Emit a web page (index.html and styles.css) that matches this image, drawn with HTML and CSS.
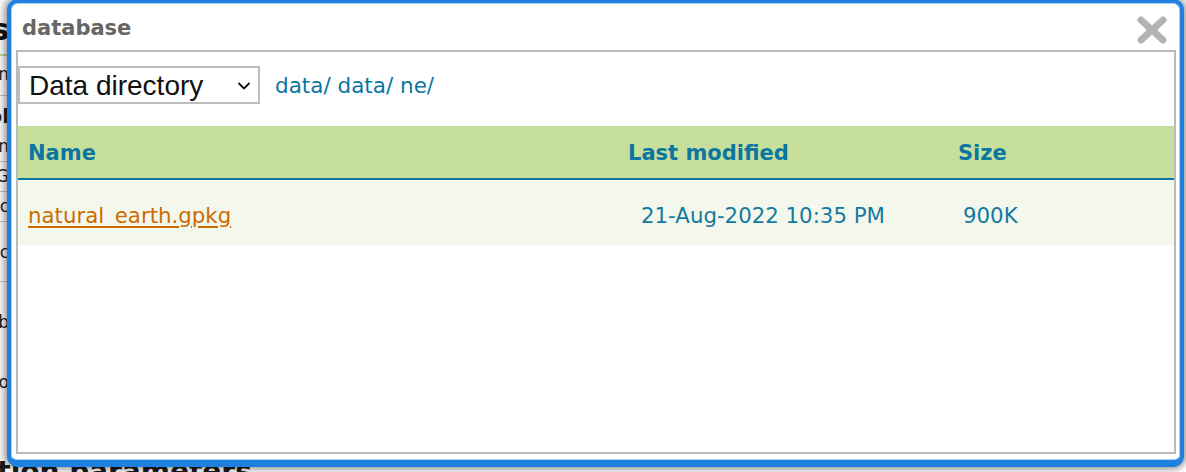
FILE: index.html
```html
<!DOCTYPE html>
<html lang="en">
<head>
<meta charset="utf-8">
<title>database</title>
<link rel="stylesheet" href="styles.css">
</head>
<body>
<div class="page">
  <div class="strip">
    <div class="srow h1row"><span class="big">Settings</span></div>
    <div class="srow r1"><span>Connection</span></div>
    <div class="srow r2 bold"><span>Pool</span></div>
    <div class="srow r3 line"><span>Min</span></div>
    <div class="srow r3 line"><span>EPSG</span></div>
    <div class="srow r3 line"><span>Spec</span></div>
    <div class="srow r4 line"><span>Exec</span></div>
    <div class="srow r5"><span>Tab</span></div>
    <div class="srow r6"><span>Info</span></div>
  </div>
  <h2 class="section">Connection parameters</h2>
</div>

<div class="dialog">
  <div class="titlebar">
    <span class="title">database</span>
    <span class="close" aria-label="close">
      <svg width="32" height="28" viewBox="0 0 32 28">
        <path d="M5 4 L27 24 M27 4 L5 24" stroke="#b3b3b3" stroke-width="7" stroke-linecap="round" fill="none"/>
      </svg>
    </span>
  </div>
  <div class="box">
    <div class="toolbar">
      <div class="selectwrap">
        <select class="dirselect">
          <option>Data directory</option>
        </select>
        <svg class="chev" width="14" height="10" viewBox="0 0 14 10">
          <path d="M1.5 2 L7 7.5 L12.5 2" stroke="#111" stroke-width="1.8" fill="none"/>
        </svg>
      </div>
      <a class="crumbs" href="#">data/ data/ ne/</a>
    </div>
    <div class="table">
      <div class="thead">
        <div class="th c1">Name</div>
        <div class="th c2">Last modified</div>
        <div class="th c3">Size</div>
      </div>
      <div class="trow">
        <div class="td c1"><a class="file" href="#">natural_earth.gpkg</a></div>
        <div class="td c2 date">21-Aug-2022 10:35 PM</div>
        <div class="td c3 size">900K</div>
      </div>
    </div>
  </div>
</div>
</body>
</html>
```

FILE: styles.css
```css
* { box-sizing: border-box; }

html, body {
  margin: 0;
  padding: 0;
  width: 1186px;
  height: 472px;
  overflow: hidden;
  background: #ffffff;
  font-family: "DejaVu Sans", Verdana, sans-serif;
}

body { position: relative; }

/* background page (mostly hidden by the modal) */
.page {
  display: flex;
  flex-direction: column;
  height: 472px;
}

.strip {
  width: 9px;
  overflow: hidden;
  display: flex;
  flex-direction: column;
  flex: 1;
  background: #f7f7f7;
}

.srow {
  display: flex;
  justify-content: flex-end;
  white-space: nowrap;
  color: #222;
  font-size: 17px;
  font-family: "DejaVu Sans", sans-serif;
  flex-shrink: 0;
}

.h1row {
  height: 56px;
  padding-top: 12px;
  border-bottom: 2px solid #b9d49a;
}
.big { font-size: 30px; font-weight: bold; color: #111; }

.r1 { height: 40px; padding-top: 8px; border-bottom: 1px solid #bbb; }
.r2 { height: 36px; padding-top: 8px; font-weight: bold; font-size: 20px; }
.r3 { height: 30px; padding-top: 4px; }
.line { border-bottom: 1px solid #bbb; }
.r4 { height: 60px; padding-top: 20px; }
.r5 { height: 60px; padding-top: 30px; }
.r6 { height: 60px; padding-top: 30px; }

.section {
  margin: auto 0 0 0;
  height: 6px;
  overflow: visible;
  font-size: 28px;
  font-weight: bold;
  color: #1a1a1a;
  line-height: 28px;
  white-space: nowrap;
  text-indent: -118px;
  transform: translateY(-8px);
}

/* modal dialog */
.dialog {
  position: absolute;
  left: 7px;
  top: -1px;
  width: 1177px;
  height: 468px;
  background: #ffffff;
  border: 4px solid #1f80e0;
  border-bottom-width: 7px;
  border-radius: 11px;
  box-shadow: inset 0 0 0 1px #a9d0f7, 0 0 7px 2px rgba(0, 0, 0, 0.45);
  display: flex;
  flex-direction: column;
  padding: 0 4px 6px 5px;
}

.titlebar {
  display: flex;
  justify-content: space-between;
  align-items: center;
  height: 47px;
  padding: 0 7px 0 6px;
}

.title {
  font-size: 21px;
  font-weight: bold;
  color: #666666;
  line-height: 24px;
  margin-top: 2px;
}

.close {
  display: flex;
  margin-top: 6px;
  margin-right: 1px;
  filter: blur(0.6px);
}

.box {
  flex: 1;
  border: 2px solid #bababa;
  display: flex;
  flex-direction: column;
}

.toolbar {
  display: flex;
  gap: 15px;
  padding-top: 14px;
  height: 74px;
  align-items: flex-start;
}

.selectwrap {
  position: relative;
  width: 242px;
  height: 38px;
}

.dirselect {
  appearance: none;
  -webkit-appearance: none;
  width: 100%;
  height: 100%;
  border: 2px solid #bdbdbd;
  border-radius: 0;
  background: #ffffff;
  color: #111;
  font-family: "Liberation Sans", Arial, sans-serif;
  font-size: 28px;
  padding: 0 0 0 9px;
  margin: 0;
  outline: none;
}

.chev {
  position: absolute;
  right: 9px;
  top: 15px;
}

.crumbs {
  color: #0b76a0;
  text-decoration: none;
  font-size: 21.5px;
  line-height: 40px;
}

.table {
  display: flex;
  flex-direction: column;
}

.thead, .trow {
  display: grid;
  grid-template-columns: 600px 330px 1fr;
  align-items: center;
}

.thead {
  height: 54px;
  background: #c6df9c;
  border-bottom: 2px solid #0b76a0;
}

.th {
  font-size: 21px;
  font-weight: bold;
  color: #0b76a0;
  padding-left: 10px;
  padding-top: 2px;
}

.trow {
  height: 65px;
  background: #f4f8ec;
}

.td {
  font-size: 21.3px;
  color: #137aa0;
  padding-left: 10px;
  padding-top: 5px;
}

.td.date { padding-left: 23px; }
.td.size { padding-left: 15px; }

.file {
  color: #cc6b00;
  text-decoration: underline;
  text-underline-offset: 3px;
  text-decoration-thickness: 2px;
}
```
